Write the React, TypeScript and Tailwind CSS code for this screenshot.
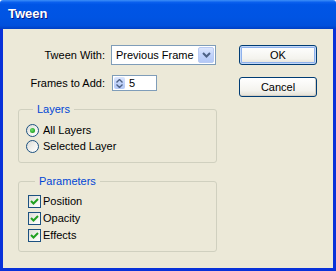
import { useState } from 'react';

type Opt = { id: string; label: string };

const PARAMS: Opt[] = [
  { id: 'position', label: 'Position' },
  { id: 'opacity', label: 'Opacity' },
  { id: 'effects', label: 'Effects' },
];

// caixinha de selecao estilo XP
function CheckBox({ checked }: { checked: boolean }) {
  return (
    <span className="w-[13px] h-[13px] shrink-0 border border-[#1c5180] bg-[linear-gradient(135deg,#dcdcd7_0%,#f4f4f0_60%,#ffffff_100%)] flex items-center justify-center">
      {checked && (
        <svg width="11" height="11" viewBox="0 0 11 11">
          <path d="M2 5 L4.5 7.5 L9 3" fill="none" stroke="#21a121" strokeWidth="2" />
        </svg>
      )}
    </span>
  );
}

function Radio({ checked }: { checked: boolean }) {
  return (
    <span className="w-[13px] h-[13px] shrink-0 rounded-full border border-[#1c5180] bg-[linear-gradient(135deg,#dcdcd7_0%,#f4f4f0_60%,#ffffff_100%)] flex items-center justify-center">
      {checked && (
        <span className="w-[5px] h-[5px] rounded-full bg-[radial-gradient(circle_at_40%_40%,#6ee06e_0%,#21a121_70%,#1b7f1b_100%)]" />
      )}
    </span>
  );
}

function XpButton({ label, isDefault }: { label: string; isDefault?: boolean }) {
  return (
    <button
      className={
        'w-[78px] h-[20px] rounded-[3px] border border-[#003c74] bg-[linear-gradient(180deg,#ffffff_0%,#f4f3ee_70%,#e3e0d5_100%)] text-black text-[11px] leading-none flex items-center justify-center ' +
        (isDefault
          ? 'shadow-[inset_0_0_0_1px_#c4d8f7,inset_0_0_0_2px_#8eb1ec]'
          : 'shadow-[inset_-1px_-1px_0_#d6d0c5]')
      }
    >
      {label}
    </button>
  );
}

export default function App() {
  const [layer, setLayer] = useState('all');
  const [params, setParams] = useState<string[]>(['position', 'opacity', 'effects']);

  const toggle = (id: string) =>
    setParams((prev) => (prev.includes(id) ? prev.filter((x) => x !== id) : [...prev, id]));

  return (
    <div className="w-[336px] h-[271px] flex flex-col font-['Liberation_Sans',Arial,sans-serif] text-[11px] text-black">
      {/* barra de titulo */}
      <div className="h-[29px] shrink-0 rounded-t-[3px] bg-[linear-gradient(180deg,#3d8ff8_0%,#0a5fee_8%,#0055e6_16%,#0054e3_60%,#0050dc_88%,#003fc4_100%)] flex items-center pl-[8px] pb-[1px]">
        <span className="text-white font-bold text-[13px] [text-shadow:1px_1px_0_#0a1883]">Tween</span>
      </div>

      <div className="flex-1 border-x-[3px] border-b-[3px] border-[#0831d9] bg-[#ece9d8] flex gap-[22px] pl-[15px] pt-[16px]">
        {/* coluna esquerda */}
        <div className="w-[199px] flex flex-col">
          <div className="h-[20px] flex items-center">
            <span className="w-[87px] text-right">Tween With:</span>
            <div className="ml-[6px] w-[105px] h-[20px] border border-[#7f9db9] bg-white flex items-center p-[1px]">
              <span className="flex-1 pl-[3px]">Previous Frame</span>
              <span className="w-[16px] h-[16px] rounded-[2px] border border-[#b9cbf3] bg-[linear-gradient(180deg,#dce6fd_0%,#c1d3fb_50%,#b4c8f6_100%)] flex items-center justify-center">
                <svg width="9" height="6" viewBox="0 0 9 6">
                  <path d="M1 1 L4.5 4.5 L8 1" fill="none" stroke="#4d6185" strokeWidth="2" />
                </svg>
              </span>
            </div>
          </div>

          <div className="mt-[10px] h-[16px] flex items-center">
            <span className="w-[87px] text-right">Frames to Add:</span>
            <div className="ml-[7px] w-[45px] h-[16px] border border-[#7f9db9] bg-white flex items-center p-[1px]">
              <span className="w-[11px] h-[12px] rounded-[2px] bg-[linear-gradient(180deg,#dce6fd_0%,#c1d3fb_50%,#b4c8f6_100%)] flex flex-col items-center justify-center gap-[1px]">
                <svg width="7" height="4" viewBox="0 0 7 4">
                  <path d="M0.5 3.5 L3.5 0.5 L6.5 3.5" fill="none" stroke="#4d6185" strokeWidth="1.4" />
                </svg>
                <svg width="7" height="4" viewBox="0 0 7 4">
                  <path d="M0.5 0.5 L3.5 3.5 L6.5 0.5" fill="none" stroke="#4d6185" strokeWidth="1.4" />
                </svg>
              </span>
              <span className="pl-[4px]">5</span>
            </div>
          </div>

          <fieldset className="mt-[11px] border border-[#d0d0bf] rounded-[3px] pl-[7px] pt-[6px] pb-[8px]">
            <legend className="ml-[7px] px-[4px] leading-[14px] text-[#0046d5]">Layers</legend>
            {[
              { id: 'all', label: 'All Layers' },
              { id: 'selected', label: 'Selected Layer' },
            ].map((o) => (
              <label key={o.id} className="h-[16px] flex items-center gap-[4px]" onClick={() => setLayer(o.id)}>
                <Radio checked={layer === o.id} />
                <span>{o.label}</span>
              </label>
            ))}
          </fieldset>

          <fieldset className="mt-[11px] border border-[#d0d0bf] rounded-[3px] pl-[9px] pt-[5px] pb-[7px]">
            <legend className="ml-[7px] px-[4px] leading-[14px] text-[#0046d5]">Parameters</legend>
            {PARAMS.map((p) => (
              <label key={p.id} className="h-[17px] flex items-center gap-[2px]" onClick={() => toggle(p.id)}>
                <CheckBox checked={params.includes(p.id)} />
                <span>{p.label}</span>
              </label>
            ))}
          </fieldset>
        </div>

        {/* botoes */}
        <div className="flex flex-col gap-[12px]">
          <XpButton label="OK" isDefault />
          <XpButton label="Cancel" />
        </div>
      </div>
    </div>
  );
}
